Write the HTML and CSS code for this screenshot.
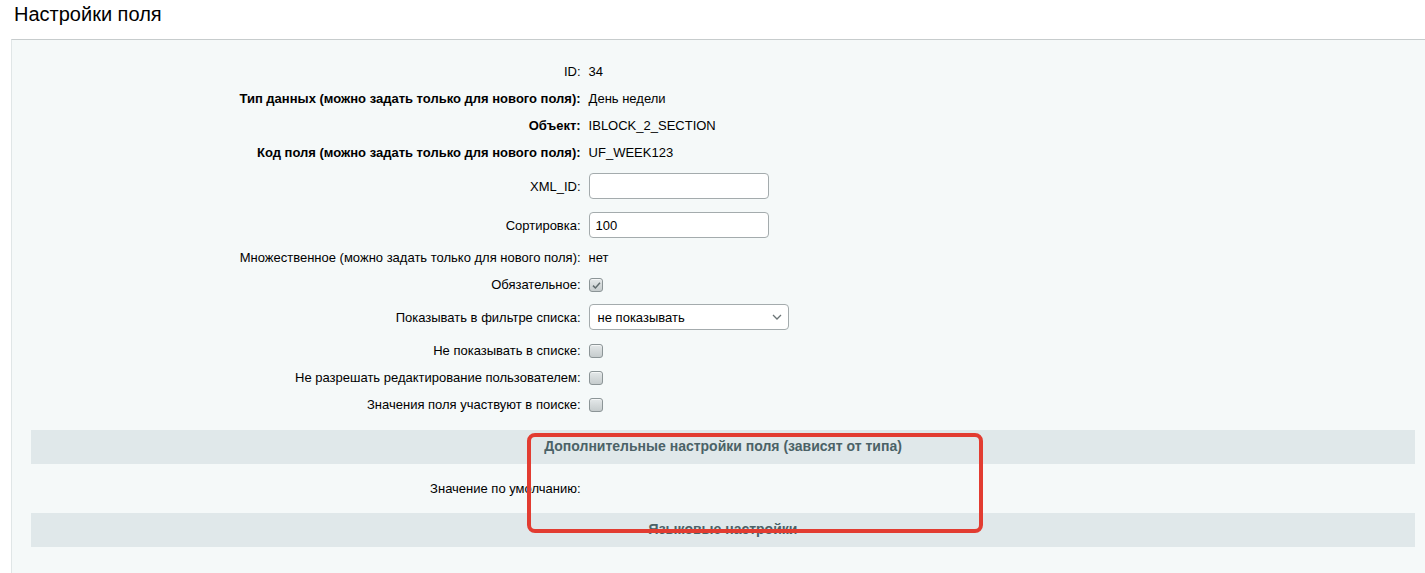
FILE: index.html
```html
<!DOCTYPE html>
<html lang="ru">
<head>
    <meta charset="UTF-8">
    <title>Настройки поля</title>
    <link rel="stylesheet" href="styles.css">
</head>
<body>
    <div class="page">
        <h1 class="page-title">Настройки поля</h1>

        <div class="detail-panel">
            <table class="detail-table">
                <tr>
                    <td class="cell-l">ID:</td>
                    <td class="cell-r">34</td>
                </tr>
                <tr>
                    <td class="cell-l bold">Тип данных (можно задать только для нового поля):</td>
                    <td class="cell-r">День недели</td>
                </tr>
                <tr>
                    <td class="cell-l bold">Объект:</td>
                    <td class="cell-r">IBLOCK_2_SECTION</td>
                </tr>
                <tr>
                    <td class="cell-l bold">Код поля (можно задать только для нового поля):</td>
                    <td class="cell-r">UF_WEEK123</td>
                </tr>
                <tr class="row-input first">
                    <td class="cell-l">XML_ID:</td>
                    <td class="cell-r"><input type="text" class="text-input" value=""></td>
                </tr>
                <tr class="row-input">
                    <td class="cell-l">Сортировка:</td>
                    <td class="cell-r"><input type="text" class="text-input" value="100"></td>
                </tr>
                <tr>
                    <td class="cell-l">Множественное (можно задать только для нового поля):</td>
                    <td class="cell-r">нет</td>
                </tr>
                <tr>
                    <td class="cell-l">Обязательное:</td>
                    <td class="cell-r"><span class="checkbox checked">
                        <svg width="11" height="11" viewBox="0 0 11 11"><path d="M2 5.6 L4.4 8 L9 2.8" fill="none" stroke="#5f6b6d" stroke-width="1.5"/></svg>
                    </span></td>
                </tr>
                <tr class="row-select">
                    <td class="cell-l">Показывать в фильтре списка:</td>
                    <td class="cell-r">
                        <div class="select-box">
                            <span>не показывать</span>
                            <svg width="10" height="6" viewBox="0 0 10 6"><path d="M1 1 L5 5 L9 1" fill="none" stroke="#6b7476" stroke-width="1.3"/></svg>
                        </div>
                    </td>
                </tr>
                <tr>
                    <td class="cell-l">Не показывать в списке:</td>
                    <td class="cell-r"><span class="checkbox"></span></td>
                </tr>
                <tr>
                    <td class="cell-l">Не разрешать редактирование пользователем:</td>
                    <td class="cell-r"><span class="checkbox"></span></td>
                </tr>
                <tr>
                    <td class="cell-l">Значения поля участвуют в поиске:</td>
                    <td class="cell-r"><span class="checkbox"></span></td>
                </tr>
                <tr class="row-spacer"><td colspan="2"></td></tr>
                <tr class="row-heading">
                    <td colspan="2">Дополнительные настройки поля (зависят от типа)</td>
                </tr>
                <tr class="row-tall">
                    <td class="cell-l">Значение по умолчанию:</td>
                    <td class="cell-r"></td>
                </tr>
                <tr class="row-heading">
                    <td colspan="2">Языковые настройки</td>
                </tr>
            </table>

            <!-- red highlight drawn over the screenshot -->
            <div class="highlight"></div>
        </div>
    </div>
</body>
</html>
```

FILE: styles.css
```css
body {
    margin: 0;
    padding: 0;
    background-color: #fff;
    font-family: "Liberation Sans", Arial, sans-serif;
    color: #000;
    overflow: hidden;
}

.page {
    padding-left: 11px;
}

.page-title {
    margin: 0 0 0 3px;
    padding-top: 2px;
    height: 37px;
    font-size: 20px;
    font-weight: normal;
    line-height: 24px;
    color: #000;
}

.detail-panel {
    position: relative;
    background-color: #f5f9f9;
    border-top: 1px solid #c7cccd;
    border-left: 1px solid #e0e6e7;
    padding: 18px 10px 40px 19px;
}

.detail-table {
    width: 100%;
    border-collapse: collapse;
    font-size: 13px;
}

.detail-table td {
    padding: 5px 4px;
    line-height: 17px;
    height: 17px;
    vertical-align: middle;
}

.cell-l {
    width: 40%;
    text-align: right;
}

.cell-l.bold {
    font-weight: bold;
}

.cell-r {
    text-align: left;
}

.row-input td {
    padding-top: 6px;
    padding-bottom: 6px;
}

.row-input.first td {
    padding-top: 7px;
    padding-bottom: 7px;
}

.row-select td {
    padding-top: 6px;
    padding-bottom: 7px;
}

.text-input {
    display: block;
    box-sizing: border-box;
    width: 180px;
    height: 26px;
    margin: 0;
    padding: 0 6px;
    border: 1px solid #a4abad;
    border-radius: 4px;
    background: #fff;
    font-family: "Liberation Sans", Arial, sans-serif;
    font-size: 13px;
    color: #000;
    outline: none;
}

.select-box {
    box-sizing: border-box;
    width: 200px;
    height: 26px;
    padding: 0 6px 0 8px;
    border: 1px solid #a4abad;
    border-radius: 4px;
    background: #fff;
    display: flex;
    align-items: center;
    justify-content: space-between;
}

.checkbox {
    display: block;
    box-sizing: border-box;
    width: 14px;
    height: 14px;
    border: 1px solid #8c9597;
    border-radius: 3px;
    background: linear-gradient(#e4e8e9, #c6cccd);
    box-shadow: inset 0 1px 0 #f4f6f6;
    position: relative;
}

.checkbox svg {
    position: absolute;
    left: 1px;
    top: 1px;
}

.row-spacer td {
    height: 12px;
    padding: 0;
}

.row-heading td {
    height: 33px;
    padding: 0 4px 1px;
    background-color: #e0e8ea;
    text-align: center;
    font-size: 14px;
    font-weight: bold;
    color: #4b6267;
}

.row-tall td {
    height: 49px;
    padding: 0 4px;
}

.highlight {
    position: absolute;
    left: 515px;
    top: 393px;
    width: 448px;
    height: 92px;
    border: 4px solid #e23c31;
    border-radius: 8px;
}
```
